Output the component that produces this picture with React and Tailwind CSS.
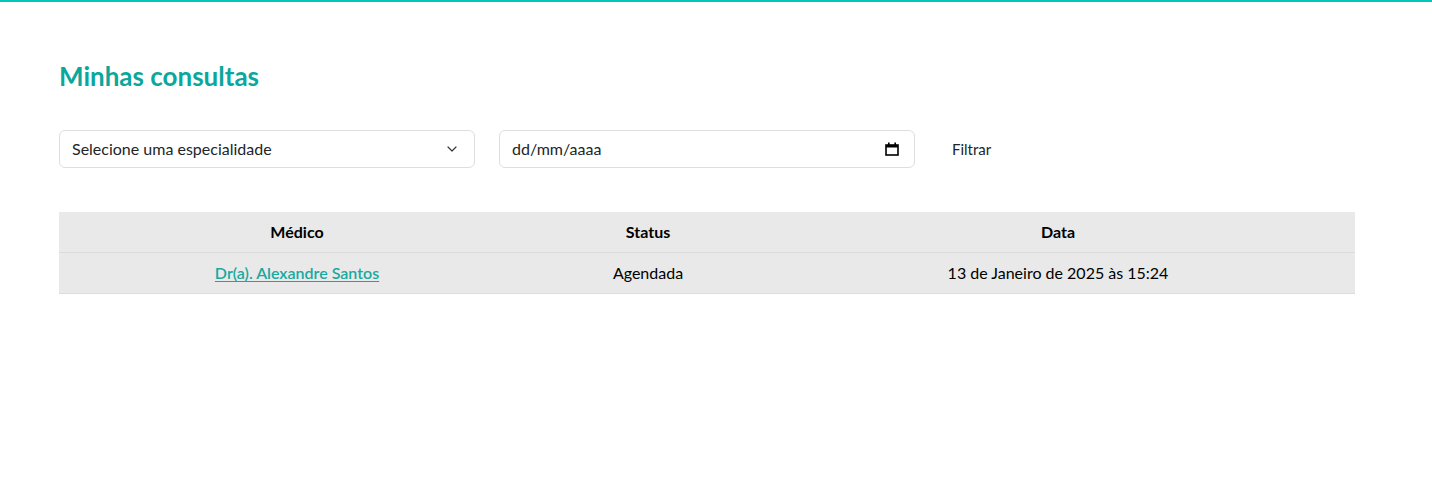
import { ChevronDown } from "lucide-react";

const consultas = [
  { id: 1, medico: "Dr(a). Alexandre Santos", status: "Agendada", data: "13 de Janeiro de 2025 às 15:24" },
];

const CalendarIcon = () => (
  <svg width="14" height="14" viewBox="0 0 14 14" fill="none">
    <rect x="1" y="3" width="12" height="10" stroke="#000" strokeWidth="1.6" />
    <rect x="1" y="3" width="12" height="2.5" fill="#000" />
    <rect x="3" y="0.5" width="1.6" height="3" fill="#000" />
    <rect x="9.4" y="0.5" width="1.6" height="3" fill="#000" />
  </svg>
);

const App = () => {
  return (
    <div className="min-h-[498px] bg-white border-t-2 border-[#00c7b7] font-['Lato',sans-serif] text-black">
      <main className="px-[59px] pt-[58px]">
        <h1 className="text-[26px] font-bold text-[#0ba79d] leading-8">Minhas consultas</h1>

        <form className="flex items-center mt-[38px] gap-6" onSubmit={(e) => e.preventDefault()}>
          <div className="w-[416px] h-[38px] flex items-center justify-between border border-[#dedede] rounded-md pl-3 pr-[14px] text-[16px] text-[#212529]">
            <span>Selecione uma especialidade</span>
            <ChevronDown size={16} strokeWidth={1.8} className="text-[#343a40]" />
          </div>
          <div className="w-[416px] h-[38px] flex items-center justify-between border border-[#dedede] rounded-md pl-3 pr-[15px] text-[16px] text-[#212529]">
            <span>dd/mm/aaaa</span>
            <CalendarIcon />
          </div>
          <button type="submit" className="px-3 py-2 ml-px text-[15px] text-[#212529]">
            Filtrar
          </button>
        </form>

        <table className="mt-[43px] w-[1296px] table-fixed border-collapse bg-[#e9e9e9] text-[16px]">
          <thead>
            <tr className="h-[41px] border-b border-[#dcdcdc]">
              <th className="w-[476px] font-bold">Médico</th>
              <th className="w-[226px] font-bold">Status</th>
              <th className="w-[594px] font-bold">Data</th>
            </tr>
          </thead>
          <tbody>
            {consultas.map((c) => (
              <tr key={c.id} className="h-[41px] border-b border-[#dcdcdc] text-center">
                <td>
                  <a href="#" className="font-semibold text-[#17a9a0] underline underline-offset-2">
                    {c.medico}
                  </a>
                </td>
                <td>{c.status}</td>
                <td>{c.data}</td>
              </tr>
            ))}
          </tbody>
        </table>
      </main>
    </div>
  );
};

export default App;
